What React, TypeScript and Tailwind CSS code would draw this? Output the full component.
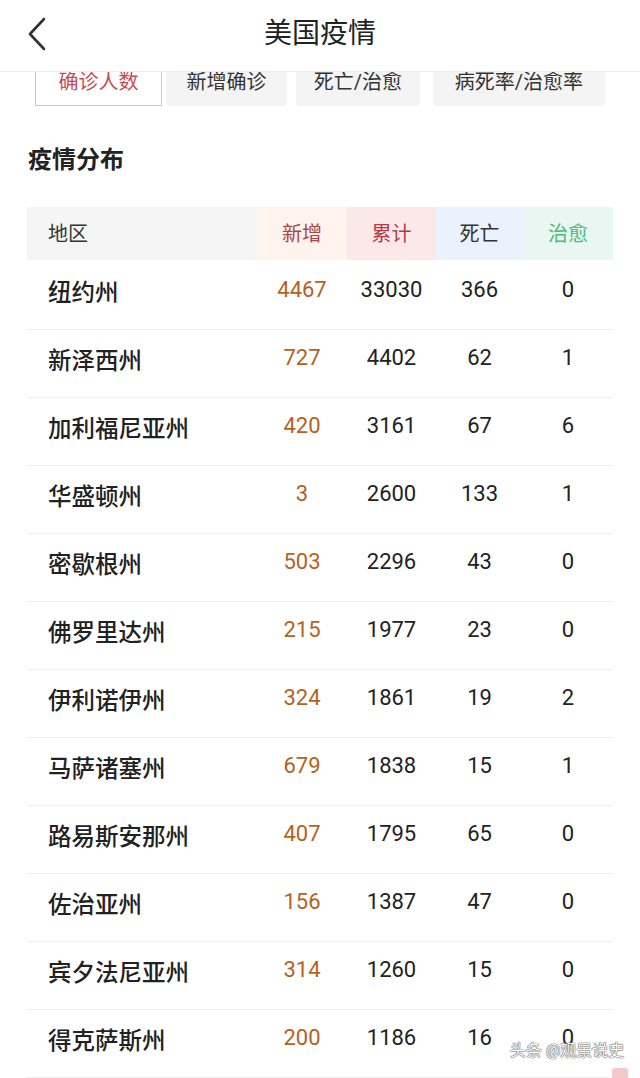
import React from 'react';

const rows = [
  { name: '纽约州', added: 4467, total: 33030, dead: 366, cured: 0 },
  { name: '新泽西州', added: 727, total: 4402, dead: 62, cured: 1 },
  { name: '加利福尼亚州', added: 420, total: 3161, dead: 67, cured: 6 },
  { name: '华盛顿州', added: 3, total: 2600, dead: 133, cured: 1 },
  { name: '密歇根州', added: 503, total: 2296, dead: 43, cured: 0 },
  { name: '佛罗里达州', added: 215, total: 1977, dead: 23, cured: 0 },
  { name: '伊利诺伊州', added: 324, total: 1861, dead: 19, cured: 2 },
  { name: '马萨诸塞州', added: 679, total: 1838, dead: 15, cured: 1 },
  { name: '路易斯安那州', added: 407, total: 1795, dead: 65, cured: 0 },
  { name: '佐治亚州', added: 156, total: 1387, dead: 47, cured: 0 },
  { name: '宾夕法尼亚州', added: 314, total: 1260, dead: 15, cured: 0 },
  { name: '得克萨斯州', added: 200, total: 1186, dead: 16, cured: 0 }
];

const tabs = ['新增确诊', '死亡/治愈', '病死率/治愈率'];

const font = { fontFamily: 'Roboto, "Noto Sans CJK SC", sans-serif' };

const App: React.FC = () => {
  return (
    <div className="relative w-[640px] h-[1078px] overflow-hidden bg-white text-[#222]" style={font}>
      <header className="h-[72px] border-b border-[#ececec] flex items-center justify-center relative">
        <svg
          className="absolute left-[26px] top-[17px]"
          width="22"
          height="34"
          viewBox="0 0 22 34"
          fill="none"
          stroke="#333"
          strokeWidth="2.6"
          strokeLinecap="round"
          strokeLinejoin="round"
        >
          <path d="M18 2 L4 17 L18 32" />
        </svg>
        <h1 className="text-[28px] text-[#222] mt-[-4px]">美国疫情</h1>
      </header>

      <div className="flex items-start pl-[35px] h-[34px]">
        <div className="w-[127px] h-[34px] border-x border-b border-[#c8c8c8] flex items-center justify-center text-[20px] text-[#c84d52] pb-[14px] leading-none">
          确诊人数
        </div>
        <div className="ml-[4px] w-[121px] h-[34px] bg-[#f4f4f4] rounded-b-[4px] flex items-center justify-center text-[20px] text-[#333] pb-[14px] leading-none">
          {tabs[0]}
        </div>
        <div className="ml-[9px] w-[124px] h-[34px] bg-[#f4f4f4] rounded-b-[4px] flex items-center justify-center text-[20px] text-[#333] pb-[14px] leading-none">
          {tabs[1]}
        </div>
        <div className="ml-[13px] w-[172px] h-[34px] bg-[#f4f4f4] rounded-b-[4px] flex items-center justify-center text-[20px] text-[#333] pb-[14px] leading-none">
          {tabs[2]}
        </div>
      </div>

      <h2 className="mt-[42px] ml-[28px] text-[24px] font-bold text-[#222] leading-none">疫情分布</h2>

      <div className="ml-[27px] mt-[35px] w-[586px]">
        <div className="grid grid-cols-[230px_90px_89px_87px_90px] h-[53px] text-[20px]">
          <div className="bg-[#f5f5f5] flex items-center pl-[21px] text-[#333]">地区</div>
          <div className="bg-[#fff3ee] flex items-center justify-center text-[#a8454d]">新增</div>
          <div className="bg-[#fbe9ea] flex items-center justify-center text-[#b43a4a]">累计</div>
          <div className="bg-[#eaf2fd] flex items-center justify-center text-[#333]">死亡</div>
          <div className="bg-[#e8f7f2] flex items-center justify-center text-[#4cba7c]">治愈</div>
        </div>

        <div className="pt-[2px]">
          {rows.map((row, idx) => (
            <div
              key={`${row.name}-${idx}`}
              className="grid grid-cols-[230px_90px_89px_87px_90px] h-[68px] border-b border-[#efefef] items-center text-[22px]"
            >
              <div className="pl-[21px] text-[23.5px] font-medium text-[#222] pb-[4px]">{row.name}</div>
              <div className="text-center text-[#b5621f] pb-[12px]">{row.added}</div>
              <div className="text-center text-[#222] pb-[12px]">{row.total}</div>
              <div className="text-center text-[#222] pb-[12px]">{row.dead}</div>
              <div className="text-center text-[#222] pb-[12px]">{row.cured}</div>
            </div>
          ))}
        </div>
      </div>

      <div
        className="absolute left-[510px] top-[1043px] text-[16px] text-white leading-none"
        style={{ textShadow: '0 0 1px #555, 0 0 1px #555, 0 0 1px #555' }}
      >
        头条 @观景说史
      </div>
      <div className="absolute left-[612px] top-[1068px] w-[16px] h-[12px] rounded-[3px] bg-[#f3c9cc]" />
    </div>
  );
};

export default App;
